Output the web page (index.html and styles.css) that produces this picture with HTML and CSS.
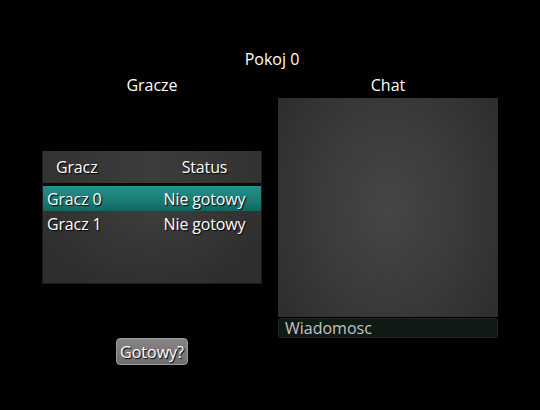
FILE: index.html
```html
<!DOCTYPE html>
<html>
<head>
<meta charset="utf-8">
<link rel="stylesheet" href="styles.css">
</head>
<body>
<div class="page">
  <div class="title">Pokoj 0</div>
  <div class="columns">
    <div class="col left">
      <div class="heading">Gracze</div>
      <div class="table">
        <div class="thead">
          <div class="th c1">Gracz</div>
          <div class="th c2">Status</div>
        </div>
        <div class="sep"></div>
        <div class="tr selected">
          <div class="td c1">Gracz 0</div>
          <div class="td c2">Nie gotowy</div>
        </div>
        <div class="tr">
          <div class="td c1">Gracz 1</div>
          <div class="td c2">Nie gotowy</div>
        </div>
      </div>
      <button class="btn">Gotowy?</button>
    </div>
    <div class="col right">
      <div class="heading">Chat</div>
      <div class="chat"></div>
      <div class="input">Wiadomosc</div>
    </div>
  </div>
</div>
</body>
</html>
```
FILE: styles.css
```css
html, body {
  margin: 0;
  padding: 0;
  background: #000;
}
body {
  width: 540px;
  height: 410px;
  overflow: hidden;
  font-family: "Open Sans", "DejaVu Sans", sans-serif;
  color: #fff;
  font-size: 16px;
}
.page {
  padding-top: 48px;
}
.title {
  text-align: center;
  line-height: 22px;
  padding-left: 4px;
}
.columns {
  display: flex;
  gap: 16px;
  margin-left: 42px;
  margin-top: 4px;
}
.col {
  width: 220px;
  display: flex;
  flex-direction: column;
}
.heading {
  text-align: center;
  line-height: 22px;
  height: 22px;
}
.left .heading { margin-bottom: 55px; }
.right .heading { margin-bottom: 2px; }
.table {
  height: 133px;
  box-sizing: border-box;
  border: 1px solid #1c1c1c;
  border-top: 0;
  background: radial-gradient(ellipse at 50% 40%, #3e3e3e 0%, #2e2e2e 80%);
  text-shadow: 1px 1px 1px #000;
  letter-spacing: -0.15px;
}
.thead {
  display: grid;
  grid-template-columns: 105px 113px;
  height: 32px;
  align-items: center;
  background: linear-gradient(to right, #323232, #3c3c3c 50%, #323232);
}
.sep {
  height: 3px;
  background: #0a0a0a;
}
.tr {
  display: grid;
  grid-template-columns: 105px 113px;
  height: 25px;
  align-items: center;
}
.tr.selected {
  background: linear-gradient(to bottom, #24918b, #1a7a75 60%, #146560);
}
.th.c1 { padding-left: 13px; }
.td.c1 { padding-left: 4px; }
.c2 { text-align: center; }
.btn {
  align-self: center;
  margin-top: 54px;
  width: 72px;
  height: 27px;
  padding: 0;
  border: 1px solid #9a9a9a;
  border-radius: 4px;
  background: linear-gradient(to bottom, #858585, #6e6e6e);
  color: #fff;
  font-family: "Open Sans", "DejaVu Sans", sans-serif;
  font-size: 16px;
  text-shadow: 1px 1px 1px #000;
}
.chat {
  height: 219px;
  background: radial-gradient(ellipse 60% 80% at 50% 50%, #464646 0%, #3a3a3a 55%, #2e2e2e 100%);
}
.input {
  margin-top: 1px;
  height: 20px;
  box-sizing: border-box;
  background: #0f1a15;
  border: 1px solid #1c2a23;
  border-radius: 3px;
  color: #c4c4c4;
  line-height: 18px;
  padding-left: 6px;
}
```
